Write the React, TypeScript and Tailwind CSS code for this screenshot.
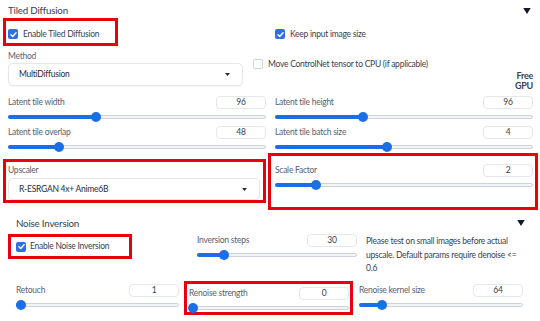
import type { ReactNode } from "react";

// Red annotation boxes are outlines, so they never push the layout around.
const RED = "outline-[3px] outline-solid outline-[#e8000b]";

const Check = ({ on }: { on?: boolean }) =>
  on ? (
    <span className="flex h-[10px] w-[10px] shrink-0 items-center justify-center rounded-[2px] bg-[#2f6fe4]">
      <svg viewBox="0 0 12 12" className="h-[9px] w-[9px]">
        <path
          d="M2.6 6.3 5 8.6 9.4 3.6"
          fill="none"
          stroke="white"
          strokeWidth="1.9"
          strokeLinecap="round"
          strokeLinejoin="round"
        />
      </svg>
    </span>
  ) : (
    <span className="h-[10px] w-[10px] shrink-0 rounded-[2px] border border-[#d1d5db] bg-white" />
  );

const Caret = () => (
  <svg viewBox="0 0 8 5" className="h-[3px] w-[5px]">
    <path d="M0 0h8L4 5z" fill="#1f2937" />
  </svg>
);

const Toggle = () => (
  <svg viewBox="0 0 10 8" className="h-[6px] w-[8px]">
    <path d="M0 0h10L5 8z" fill="#111827" />
  </svg>
);

// thumb position is data, so it goes in an inline style
const Slider = ({ pct }: { pct: number }) => (
  <div className="relative h-[10px]">
    <div className="absolute inset-x-0 top-[3px] h-[4px] rounded-full border border-[#cfd3d9] bg-[#f3f4f6]" />
    <div
      className="absolute left-0 top-[3px] h-[4px] rounded-full bg-[#1a6ee8]"
      style={{ width: `${pct}%` }}
    />
    <div
      className="absolute top-0 h-[10px] w-[10px] -translate-x-1/2 rounded-full bg-[#1a6ee8]"
      style={{ left: `${pct}%` }}
    />
  </div>
);

const NumBox = ({ value }: { value: string }) => (
  <div className="flex h-[13px] w-[50px] items-center justify-center rounded-[4px] border border-[#e5e7eb] bg-white text-[8.5px] text-[#374151]">
    {value}
  </div>
);

const SliderField = ({
  label,
  value,
  pct,
}: {
  label: string;
  value: string;
  pct: number;
}) => (
  <div className="flex flex-col gap-[3px]">
    <div className="flex h-[13px] items-center justify-between">
      <span>{label}</span>
      <NumBox value={value} />
    </div>
    <Slider pct={pct} />
  </div>
);

const Select = ({ children, h }: { children: ReactNode; h: string }) => (
  <div
    className={`flex items-center justify-between rounded-[5px] border border-[#e5e7eb] bg-white pl-[10px] pr-[12px] text-[#1f2937] shadow-[0_1px_2px_rgba(0,0,0,0.04)] ${h}`}
  >
    <span>{children}</span>
    <Caret />
  </div>
);

const App = () => (
  <div className="h-[321px] w-[540px] overflow-hidden bg-white pl-[8px] pr-[7px] text-[8.5px] tracking-[-0.25px] text-[#596170] [font-family:Lato,'Noto_Sans',sans-serif]">
    <div className="flex h-[21px] items-center justify-between pr-[2px]">
      <span className="text-[9.75px] tracking-[-0.2px] text-[#374151]">
        Tiled Diffusion
      </span>
      <Toggle />
    </div>

    <div className="grid h-[22px] grid-cols-[258px_258px] gap-x-[9px]">
      <label
        className={`-ml-[2px] flex w-[109px] items-center gap-[5px] pl-[2px] pt-[4px] text-[#374151] ${RED}`}
      >
        <Check on />
        Enable Tiled Diffusion
      </label>
      <label className="flex items-center gap-[5px] pt-[4px] text-[#374151]">
        <Check on />
        Keep input image size
      </label>
    </div>

    <div className="mt-[7px] grid h-[36px] grid-cols-[235px_280px] gap-x-[10px]">
      <div className="flex flex-col">
        <span className="flex h-[13px] items-center">Method</span>
        <Select h="h-[23px]">MultiDiffusion</Select>
      </div>
      <div className="flex flex-col">
        <label className="mt-[9px] flex h-[10px] items-center gap-[5px] text-[#374151]">
          <Check />
          Move ControlNet tensor to CPU (if applicable)
        </label>
        <div className="mt-[2px] self-end text-right text-[9px] font-bold leading-[9.5px] text-[#374151]">
          Free
          <br />
          GPU
        </div>
      </div>
    </div>

    <div className="mt-[10px] grid grid-cols-[258px_258px] gap-x-[9px] gap-y-[4px]">
      <SliderField label="Latent tile width" value="96" pct={34.1} />
      <SliderField label="Latent tile height" value="96" pct={34.1} />
      <SliderField label="Latent tile overlap" value="48" pct={19.8} />
      <SliderField label="Latent tile batch size" value="4" pct={43.4} />
    </div>

    <div className="mt-[4px] grid grid-cols-[258px_258px] items-start gap-x-[9px]">
      <div className={`-ml-[2px] mr-[3px] mt-[6px] flex h-[38px] flex-col pl-[2px] pr-[3px] ${RED}`}>
        <span className="flex h-[16px] items-center">Upscaler</span>
        <Select h="h-[22px]">R-ESRGAN 4x+ Anime6B</Select>
      </div>
      <div className={`-ml-[4px] -mr-[2px] h-[51px] pl-[4px] pr-[2px] pt-[8px] ${RED}`}>
        <SliderField label="Scale Factor" value="2" pct={15.9} />
      </div>
    </div>

    <div className="ml-[8px] mr-[6px]">
      <div className="mt-[6px] flex h-[20px] items-center justify-between pr-[2px]">
        <span className="text-[9.75px] tracking-[-0.2px] text-[#374151]">
          Noise Inversion
        </span>
        <Toggle />
      </div>

      <div className="grid grid-cols-[172px_160px_161px] gap-x-[9px]">
        <div>
          <label
            className={`-ml-[5px] mt-[4px] flex h-[19px] w-[118px] items-center gap-[4px] pl-[5px] text-[#374151] ${RED}`}
          >
            <Check on />
            Enable Noise Inversion
          </label>
        </div>
        <div className="flex flex-col gap-[4px] pt-[1px]">
          <div className="flex h-[12px] items-center justify-between">
            <span>Inversion steps</span>
            <NumBox value="30" />
          </div>
          <Slider pct={16.9} />
        </div>
        <p className="whitespace-nowrap pt-[2px] leading-[13.5px] text-[#374151]">
          Please test on small images before actual
          <br />
          upscale. Default params require denoise &lt;=
          <br />
          0.6
        </p>
      </div>

      <div className="mt-[8px] grid grid-cols-[163px_160px_164px] gap-x-[10px]">
        <SliderField label="Retouch" value="1" pct={2.8} />
        <div className={`-ml-[2px] -mr-[1px] h-[28px] pl-[2px] pr-[1px] pt-[3px] ${RED}`}>
          <SliderField label="Renoise strength" value="0" pct={2.8} />
        </div>
        <SliderField label="Renoise kernel size" value="64" pct={14} />
      </div>
    </div>
  </div>
);

export default App;
